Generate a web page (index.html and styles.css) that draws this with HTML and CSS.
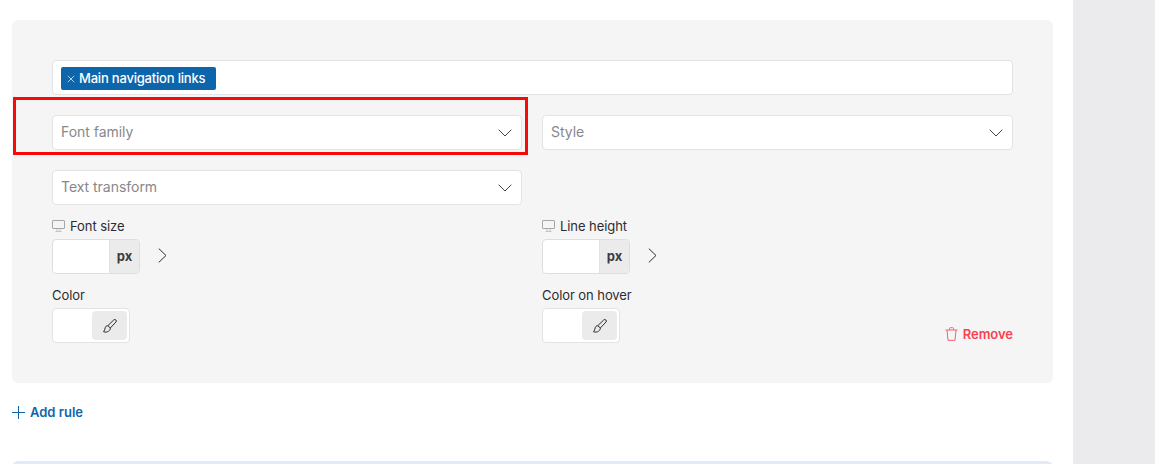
FILE: index.html
```html
<!DOCTYPE html>
<html lang="en">
<head>
<meta charset="utf-8">
<title>Typography rules</title>
<link rel="stylesheet" href="styles.css">
</head>
<body>
<div class="page">
  <main class="main">
    <section class="card">
      <div class="tagfield">
        <span class="tag"><svg class="tag-x" viewBox="0 0 8 8" width="8" height="8"><path d="M.8.8l6.4 6.4M7.2.8L.8 7.2"/></svg>Main navigation links</span>
      </div>
      <div class="row selects">
        <div class="select highlighted"><span class="value">Font family</span><svg class="chev" viewBox="0 0 14 8" width="14" height="8"><path d="M.7.7L7 7l6.3-6.3"/></svg><div class="redbox"></div></div>
        <div class="select"><span class="value">Style</span><svg class="chev" viewBox="0 0 14 8" width="14" height="8"><path d="M.7.7L7 7l6.3-6.3"/></svg></div>
      </div>
      <div class="row selects">
        <div class="select"><span class="value">Text transform</span><svg class="chev" viewBox="0 0 14 8" width="14" height="8"><path d="M.7.7L7 7l6.3-6.3"/></svg></div>
      </div>
      <div class="row sizes">
        <div class="sizecol">
          <label class="label"><svg class="monitor" viewBox="0 0 13 12" width="13" height="12"><path d="M.5 1a.5.5 0 0 1 .5-.5h11a.5.5 0 0 1 .5.5v7a.5.5 0 0 1-.5.5H1a.5.5 0 0 1-.5-.5z"/><path class="stand" d="M3.500 11.500h6M5 9v2.500M8 9v2.500"/></svg>Font size</label>
          <div class="sizeline">
            <div class="unitbox"><div class="unitinput"></div><div class="unit"><span class="unit-text">px</span></div></div>
            <svg class="more" viewBox="0 0 9 15" width="9" height="15"><path d="M.8.6L8 7.500.8 14.400"/></svg>
          </div>
        </div>
        <div class="sizecol">
          <label class="label"><svg class="monitor" viewBox="0 0 13 12" width="13" height="12"><path d="M.5 1a.5.5 0 0 1 .5-.5h11a.5.5 0 0 1 .5.5v7a.5.5 0 0 1-.5.5H1a.5.5 0 0 1-.5-.5z"/><path class="stand" d="M3.500 11.500h6M5 9v2.500M8 9v2.500"/></svg>Line height</label>
          <div class="sizeline">
            <div class="unitbox"><div class="unitinput"></div><div class="unit"><span class="unit-text">px</span></div></div>
            <svg class="more" viewBox="0 0 9 15" width="9" height="15"><path d="M.8.6L8 7.500.8 14.400"/></svg>
          </div>
        </div>
      </div>
      <div class="row colors">
        <div class="colorcol">
          <label class="label plain">Color</label>
          <div class="colorbox"><div class="picker"><svg viewBox="0 0 14 14" width="14" height="14"><path d="M4.800 6.700L10.700 1a1.500 1.500 0 0 1 2.200 2.100L7.300 9"/><path d="M4.800 6.700C3.300 6.700 2.400 7.600 2.200 8.800 2 10 1.500 11.500.6 12.800c1.700.6 3.700.3 5-.6 1.100-.8 1.800-2 1.700-3.200z"/></svg></div></div>
        </div>
        <div class="colorcol">
          <label class="label plain">Color on hover</label>
          <div class="colorline">
            <div class="colorbox"><div class="picker"><svg viewBox="0 0 14 14" width="14" height="14"><path d="M4.800 6.700L10.700 1a1.500 1.500 0 0 1 2.200 2.100L7.300 9"/><path d="M4.800 6.700C3.300 6.700 2.400 7.600 2.200 8.800 2 10 1.500 11.500.6 12.800c1.700.6 3.700.3 5-.6 1.100-.8 1.800-2 1.700-3.200z"/></svg></div></div>
            <a class="remove"><svg viewBox="0 0 13 14" width="13" height="14"><path d="M.5 3h12M4.500 3V1.500a.8.8 0 0 1 .8-.8h2.400a.8.800 0 0 1 .8.8V3M2 3l1 10.300h7L11 3"/></svg>Remove</a>
          </div>
        </div>
      </div>
    </section>
    <a class="addrule"><svg viewBox="0 0 13 13" width="13" height="13"><path d="M6.500 0v13M0 6.500h13"/></svg>Add rule</a>
    <div class="nextcard"></div>
  </main>
  <aside class="side"></aside>
</div>
</body>
</html>
```
FILE: styles.css
```css
* { box-sizing: border-box; }
html, body { margin: 0; height: 464px; overflow: hidden; }
body { background: #fff; font-family: Inter, "Liberation Sans", sans-serif; font-size: 13px; color: #2c2c30; }
.page { display: flex; height: 464px; }
.main { width: 1073px; padding: 20px 20px 0 12px; overflow: hidden; }
.side { flex: 1; background: #ebebed; }
.card { height: 363px; background: #f5f5f5; border-radius: 6px; padding: 40px 40px 0; }
.tagfield { height: 35px; background: #fff; border: 1px solid #e3e3e3; border-radius: 4px; padding: 6px 8px; }
.tag { display: inline-flex; align-items: center; height: 23px; padding: 0 11px 0 6px; background: #0d66ab; color: #fff; border-radius: 2px; font-size: 13px; font-weight: 500; line-height: 23px; letter-spacing: -.2px; }
.tag-x { margin-right: 4px; fill: none; stroke: #b5d0e6; stroke-width: 1; }
.row { display: flex; gap: 20px; }
.selects { margin-top: 20px; }
.select { position: relative; width: 470px; height: 35px; background: #fff; border: 1px solid #e3e3e3; border-radius: 4px; padding: 0 9px 0 8px; display: flex; align-items: center; justify-content: space-between; color: #87878c; font-size: 14px; }
.select + .select { width: 471px; }
.value { margin-top: -2px; letter-spacing: -.03px; }
.chev { fill: none; stroke: #44444a; stroke-width: 1; }
.redbox { position: absolute; left: -40px; top: -19px; width: 515px; height: 58px; border: 3px solid #f60a0a; pointer-events: none; }
.sizes { margin-top: 13px; }
.sizecol, .colorcol { width: 470px; }
.sizecol + .sizecol, .colorcol + .colorcol { width: 471px; }
.label { display: flex; align-items: center; height: 16px; line-height: 16px; font-size: 13px; color: #2c2c30; margin-bottom: 5px; letter-spacing: -.07px; }
.monitor { margin-right: 5px; fill: none; stroke: #a6a6aa; stroke-width: 1; }
.monitor .stand { stroke: #c4c4c8; }
.sizeline { display: flex; align-items: center; }
.unitbox { width: 88px; height: 35px; display: flex; border: 1px solid #dedede; border-radius: 4px; overflow: hidden; background: #fff; }
.unitinput { flex: 1; }
.unit { width: 30px; background: #ebebeb; border-left: 1px solid #e3e3e3; display: flex; align-items: center; justify-content: center; font-weight: 700; font-size: 13px; color: #3c3c42; }
.unit-text { margin-top: -2px; }
.more { margin: -2px 0 0 18px; fill: none; stroke: #2c2c30; stroke-width: 1; }
.colors { margin-top: 13px; }
.colorbox { width: 78px; height: 35px; background: #fff; border: 1px solid #e3e3e3; border-radius: 4px; padding: 2px 2px 2px 39px; }
.picker { width: 35px; height: 29px; background: #ebebeb; border-radius: 4px; display: flex; align-items: center; justify-content: center; }
.picker svg { fill: none; stroke: #2c2c30; stroke-width: 1; }
.colorline { display: flex; justify-content: space-between; align-items: center; }
.remove { display: flex; align-items: center; gap: 5px; color: #fb3f4f; font-weight: 600; font-size: 13px; margin-top: 16px; letter-spacing: -.03px; }
.remove svg { fill: none; stroke: #f9606c; stroke-width: 1; }
.addrule { display: flex; align-items: center; gap: 5px; margin-top: 21px; height: 16px; color: #0d66ab; font-weight: 600; font-size: 13px; }
.addrule svg { fill: none; stroke: #0d66ab; stroke-width: 1; }
.nextcard { margin-top: 41px; height: 30px; background: #e2eafa; border-radius: 6px; }
```
